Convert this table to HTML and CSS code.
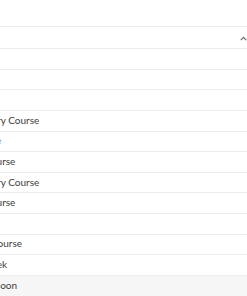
FILE: index.html
```html
<!DOCTYPE html>
<html>
<head>
<meta charset="utf-8">
<link rel="stylesheet" href="styles.css">
</head>
<body>
<div class="top"></div>
<div class="table">
  <div class="head">
    <svg class="chev" width="7" height="5" viewBox="0 0 7 5"><polyline points="0.8,4.2 3.5,1.3 6.2,4.2" fill="none" stroke="#6b6b6b" stroke-width="1.2"/></svg>
  </div>
  <div class="row"><span class="txt"></span></div>
  <div class="row"><span class="txt"></span></div>
  <div class="row"><span class="txt"></span></div>
  <div class="row"><span class="txt">Introductory Course</span></div>
  <div class="row"><span class="txt link">Learn More</span></div>
  <div class="row"><span class="txt">Private Course</span></div>
  <div class="row"><span class="txt">Introductory Course</span></div>
  <div class="row"><span class="txt">Private Course</span></div>
  <div class="row"><span class="txt"></span></div>
  <div class="row"><span class="txt">Practical Course</span></div>
  <div class="row"><span class="txt">Sports Week</span></div>
  <div class="row muted"><span class="txt">Launches Soon</span></div>
</div>
</body>
</html>
```
FILE: styles.css
```css
html, body {
  margin: 0;
  padding: 0;
  background: #ffffff;
}
body {
  font-family: Lato, "Open Sans", sans-serif;
  font-size: 10px;
  color: #3d3d3d;
  overflow: hidden;
}
.top {
  height: 26px;
}
.table {
  display: flex;
  flex-direction: column;
}
.head {
  height: 22px;
  box-sizing: border-box;
  border-top: 1px solid #ededed;
  display: flex;
  align-items: center;
  justify-content: flex-end;
}
.chev {
  display: block;
  margin-top: 1px;
}
.row {
  height: 20.64px;
  box-sizing: border-box;
  border-top: 1px solid #ededed;
  padding-bottom: 2px;
  display: flex;
  align-items: center;
  overflow: hidden;
  white-space: nowrap;
}
.txt {
  margin-left: -49px;
}
.link {
  color: #5aa2e6;
}
.muted {
  background: #f6f6f6;
  height: 30px;
  align-items: flex-start;
  padding-top: 3px;
}
```
